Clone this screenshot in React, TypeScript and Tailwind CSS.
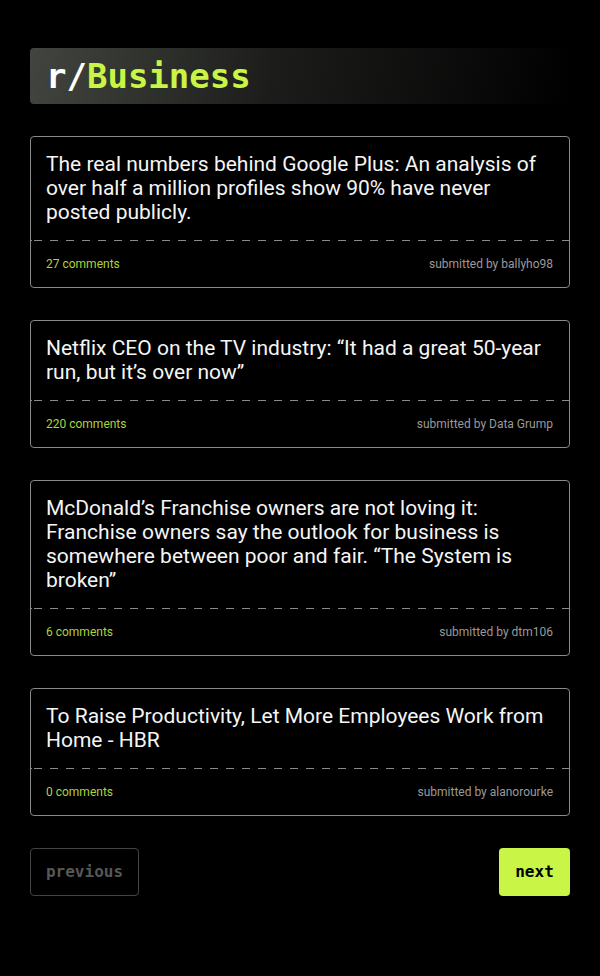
import React from "react";

const posts = [
  {
    title:
      "The real numbers behind Google Plus: An analysis of over half a million profiles show 90% have never posted publicly.",
    comments: "27 comments",
    by: "submitted by ballyho98",
  },
  {
    title: "Netflix CEO on the TV industry: \u201cIt had a great 50-year run, but it\u2019s over now\u201d",
    comments: "220 comments",
    by: "submitted by Data Grump",
  },
  {
    title:
      "McDonald\u2019s Franchise owners are not loving it: Franchise owners say the outlook for business is somewhere between poor and fair. \u201cThe System is broken\u201d",
    comments: "6 comments",
    by: "submitted by dtm106",
  },
  {
    title: "To Raise Productivity, Let More Employees Work from Home - HBR",
    comments: "0 comments",
    by: "submitted by alanorourke",
  },
];

export default function App() {
  return (
    <div className="min-h-[976px] w-[600px] bg-black px-[30px] pt-[48px] font-['Roboto',sans-serif]">
      <div className="flex h-[56px] items-center rounded-[4px] bg-[linear-gradient(100deg,#42453f_0%,#1c1d1b_45%,#000_100%)] pl-[16px]">
        <h1 className="font-['DejaVu_Sans_Mono',monospace] text-[34px] font-bold leading-none">
          <span className="text-white">r/</span>
          <span className="text-[#c8f546]">Business</span>
        </h1>
      </div>
      <div className="mt-[32px] flex flex-col gap-[32px]">
        {posts.map((p, i) => (
          <div key={i} className="rounded-[4px] border border-[#8a8a8a]">
            <div className="px-[15px] pt-[15px] pb-[16px] text-[21px] leading-[24px] text-[#f5f5f5]">
              {p.title}
            </div>
            <div className="h-px bg-[repeating-linear-gradient(to_right,#8a8a8a_0px,#8a8a8a_8px,transparent_8px,transparent_16px)] bg-[position:3px_0]" />
            <div className="flex items-center justify-between pl-[15px] pr-[16px] pt-[15px] pb-[15px] text-[12px] leading-[16px]">
              <span className="text-[#abd338]">{p.comments}</span>
              <span className="text-[#9a9a9a]">{p.by}</span>
            </div>
          </div>
        ))}
      </div>
      <div className="mt-[32px] flex items-center justify-between">
        <button className="h-[48px] w-[109px] rounded-[4px] border border-[#444444] font-['DejaVu_Sans_Mono',monospace] text-[16px] font-bold text-[#575757]">
          previous
        </button>
        <button className="h-[48px] w-[71px] rounded-[4px] bg-[#c8f546] font-['DejaVu_Sans_Mono',monospace] text-[16px] font-bold text-black">
          next
        </button>
      </div>
    </div>
  );
}
